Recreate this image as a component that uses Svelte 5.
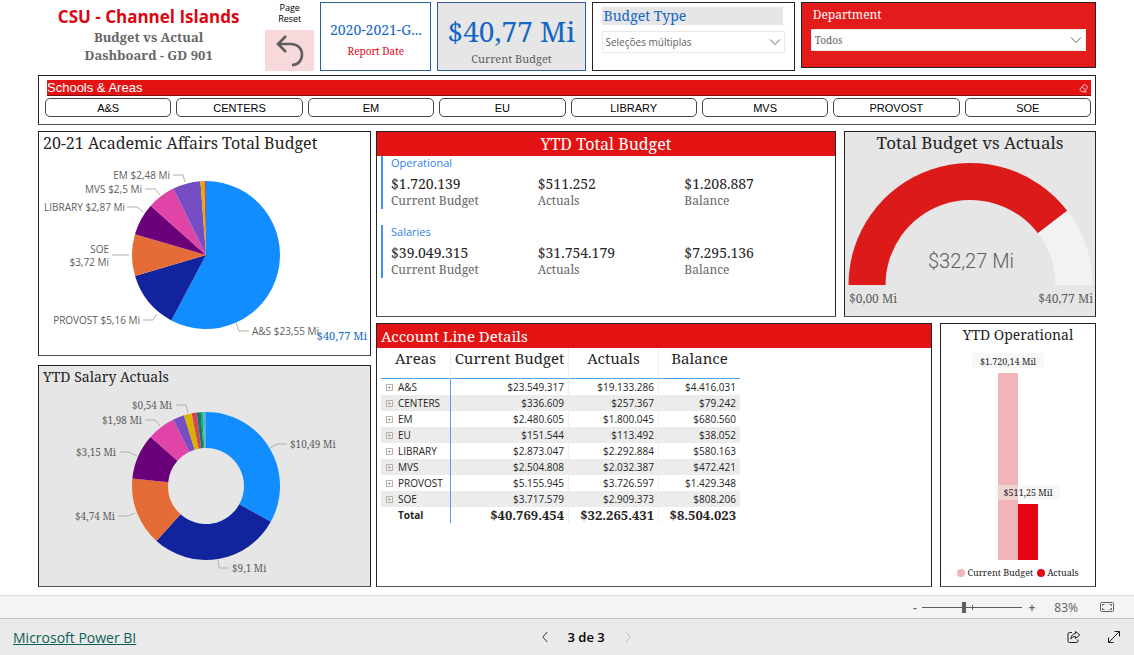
<script lang="ts">
	type Slice = { value: number; color: string };
	type Label = { text: string; x: number; y: number; anchor: 'start' | 'end'; line: string };

	const schools = ['A&S', 'CENTERS', 'EM', 'EU', 'LIBRARY', 'MVS', 'PROVOST', 'SOE'];
	let selected: string | null = $state(null);
	let zoom: number = $state(41);

	const budget: Slice[] = [
		{ value: 23.549, color: '#118dff' },
		{ value: 5.156, color: '#12239e' },
		{ value: 3.718, color: '#e66c37' },
		{ value: 2.873, color: '#6b007b' },
		{ value: 2.505, color: '#e044a7' },
		{ value: 2.481, color: '#744ec2' },
		{ value: 0.337, color: '#d9b300' },
		{ value: 0.152, color: '#d64550' }
	];
	const budgetLabels: Label[] = [
		{ text: 'EM $2,48 Mi', x: 131, y: 25, anchor: 'end', line: '134,21 144,21 146,28' },
		{ text: 'MVS $2,5 Mi', x: 103, y: 39, anchor: 'end', line: '106,35 116,35 121,41' },
		{ text: 'LIBRARY $2,87 Mi', x: 86, y: 57, anchor: 'end', line: '88,53 98,53 104,58' },
		{ text: 'SOE', x: 70, y: 99, anchor: 'end', line: '73,101 90,101' },
		{ text: '$3,72 Mi', x: 70, y: 112, anchor: 'end', line: '' },
		{ text: 'PROVOST $5,16 Mi', x: 101, y: 170, anchor: 'end', line: '104,166 114,166 118,160' },
		{ text: 'A&S $23,55 Mi', x: 213, y: 181, anchor: 'start', line: '197,169 200,177 210,177' }
	];

	const salaries: Slice[] = [
		{ value: 10.49, color: '#118dff' },
		{ value: 9.1, color: '#12239e' },
		{ value: 4.74, color: '#e66c37' },
		{ value: 3.15, color: '#6b007b' },
		{ value: 1.98, color: '#e044a7' },
		{ value: 0.77, color: '#744ec2' },
		{ value: 0.54, color: '#d9b300' },
		{ value: 0.35, color: '#d64550' },
		{ value: 0.28, color: '#197278' },
		{ value: 0.13, color: '#1aab40' },
		{ value: 0.07, color: '#15c6c4' },
		{ value: 0.16, color: '#5ea9e8' }
	];
	const salaryLabels: Label[] = [
		{ text: '$0,54 Mi', x: 133, y: 21, anchor: 'end', line: '137,17 147,17 149,25' },
		{ text: '$1,98 Mi', x: 103, y: 36, anchor: 'end', line: '106,32 116,32 121,38' },
		{ text: '$3,15 Mi', x: 77, y: 68, anchor: 'end', line: '81,64 90,64 98,68' },
		{ text: '$4,74 Mi', x: 76, y: 132, anchor: 'end', line: '79,128 89,128 96,125' },
		{ text: '$10,49 Mi', x: 251, y: 60, anchor: 'start', line: '231,60 238,56 248,56' },
		{ text: '$9,1 Mi', x: 193, y: 184, anchor: 'start', line: '179,172 180,180 190,180' }
	];

	const totals = [
		{ group: 'Operational', budget: '$1.720.139', actuals: '$511.252', balance: '$1.208.887' },
		{ group: 'Salaries', budget: '$39.049.315', actuals: '$31.754.179', balance: '$7.295.136' }
	];

	const rows = [
		['A&S', '$23.549.317', '$19.133.286', '$4.416.031'],
		['CENTERS', '$336.609', '$257.367', '$79.242'],
		['EM', '$2.480.605', '$1.800.045', '$680.560'],
		['EU', '$151.544', '$113.492', '$38.052'],
		['LIBRARY', '$2.873.047', '$2.292.884', '$580.163'],
		['MVS', '$2.504.808', '$2.032.387', '$472.421'],
		['PROVOST', '$5.155.945', '$3.726.597', '$1.429.348'],
		['SOE', '$3.717.579', '$2.909.373', '$808.206']
	];

	function arc(cx: number, cy: number, outer: number, inner: number, from: number, to: number) {
		const pt = (r: number, a: number) => `${cx + r * Math.sin(a)},${cy - r * Math.cos(a)}`;
		const large = to - from > Math.PI ? 1 : 0;
		return `M${pt(outer, from)} A${outer},${outer} 0 ${large} 1 ${pt(outer, to)} L${pt(inner, to)} A${inner},${inner} 0 ${large} 0 ${pt(inner, from)} Z`;
	}

	function ring(slices: Slice[], cx: number, cy: number, outer: number, inner: number) {
		const total = slices.reduce((sum, s) => sum + s.value, 0);
		let angle = 0;
		return slices.map((s) => {
			const start = angle;
			angle += (s.value / total) * Math.PI * 2;
			return { color: s.color, d: arc(cx, cy, outer, inner, start, angle) };
		});
	}

	const split = -Math.PI / 2 + (32.265 / 40.769) * Math.PI;
</script>

{#snippet chevron()}
	<svg class="chevron" viewBox="0 0 12 8" width="12" height="8" aria-hidden="true">
		<path d="M1 1.5 6 6.5 11 1.5" fill="none" stroke="currentColor" />
	</svg>
{/snippet}

{#snippet labels(items: Label[])}
	{#each items as l}
		<polyline points={l.line} fill="none" stroke="#b3b0ad" />
		<text x={l.x} y={l.y} text-anchor={l.anchor}>{l.text}</text>
	{/each}
{/snippet}

<main class="report">
	<header class="top">
		<div class="title">
			<h1>CSU - Channel Islands</h1>
			<p>Budget vs Actual<br />Dashboard - GD 901</p>
		</div>
		<div class="reset">
			<label for="reset">Page<br />Reset</label>
			<button id="reset" onclick={() => (selected = null)}>
				<svg viewBox="0 0 30 34" width="30" height="34" aria-hidden="true">
					<path d="M11 2 3 10 11 18M3 10H16C23 10 27 15 27 20.500C27 26.500 23 31 17 31" fill="none" stroke="#605e5c" stroke-width="2.600" />
				</svg>
			</button>
		</div>
		<div class="card date">
			<strong>2020-2021-G...</strong>
			<span>Report Date</span>
		</div>
		<div class="card amount">
			<strong>$40,77 Mi</strong>
			<span>Current Budget</span>
		</div>
		<div class="slicer">
			<label for="type">Budget Type</label>
			<div class="select">
				<select id="type"><option>Seleções múltiplas</option></select>
				{@render chevron()}
			</div>
		</div>
		<div class="slicer department">
			<label for="department">Department</label>
			<div class="select">
				<select id="department"><option>Todos</option></select>
				{@render chevron()}
			</div>
		</div>
	</header>

	<section class="panel schools">
		<div class="schools-head">
			<h2>Schools & Areas</h2>
			<button class="clear" aria-label="Clear" onclick={() => (selected = null)}>
				<svg viewBox="0 0 10 10" width="10" height="10" aria-hidden="true">
					<path d="M1 6 5.500 1.200 9 4.300 4.700 8.800H3L1 7ZM3 4 6.700 7M4.700 8.800H8" fill="none" stroke="#f3c0c0" />
				</svg>
			</button>
		</div>
		<div class="chips">
			{#each schools as s}
				<button class:active={selected === s} onclick={() => (selected = s)}>{s}</button>
			{/each}
		</div>
	</section>

	<div class="columns">
		<div class="stack left">
			<section class="panel">
				<h2 class="big">20-21 Academic Affairs Total Budget</h2>
				<svg class="chart sans" viewBox="0 0 331 201">
					{#each ring(budget, 167, 101, 74, 0) as s}
						<path d={s.d} fill={s.color} />
					{/each}
					{@render labels(budgetLabels)}
					<text class="sum" x="328" y="186" text-anchor="end">$40,77 Mi</text>
				</svg>
			</section>
			<section class="panel gray">
				<h2>YTD Salary Actuals</h2>
				<svg class="chart" viewBox="0 0 331 198">
					{#each ring(salaries, 167, 98, 74, 38) as s}
						<path d={s.d} fill={s.color} />
					{/each}
					{@render labels(salaryLabels)}
				</svg>
			</section>
		</div>

		<div class="stack right">
			<div class="pair upper">
				<section class="panel">
					<h2 class="red big center">YTD Total Budget</h2>
					{#each totals as t}
						<div class="totals">
							<h3>{t.group}</h3>
							<dl>
								<div><dt>Current Budget</dt><dd>{t.budget}</dd></div>
								<div><dt>Actuals</dt><dd>{t.actuals}</dd></div>
								<div><dt>Balance</dt><dd>{t.balance}</dd></div>
							</dl>
						</div>
					{/each}
				</section>
				<section class="panel gray">
					<h2 class="large center">Total Budget vs Actuals</h2>
					<svg class="chart gauge" viewBox="0 0 250 160">
						<path d={arc(125.5, 129, 122, 85, -Math.PI / 2, split)} fill="#dd1a1a" />
						<path d={arc(125.5, 129, 122, 85, split, Math.PI / 2)} fill="#f3f2f1" />
						<text class="value" x="126" y="112" text-anchor="middle">$32,27 Mi</text>
						<text x="4" y="147">$0,00 Mi</text>
						<text x="248" y="147" text-anchor="end">$40,77 Mi</text>
					</svg>
				</section>
			</div>

			<div class="pair lower">
				<section class="panel">
					<h2 class="red">Account Line Details</h2>
					<table>
						<thead>
							<tr><th>Areas</th><th>Current Budget</th><th>Actuals</th><th>Balance</th></tr>
						</thead>
						<tbody>
							{#each rows as [area, ...amounts]}
								<tr>
									<th scope="row">
										<button class="expand" aria-label="Expand {area}">
											<svg viewBox="0 0 7 7" width="7" height="7" aria-hidden="true">
												<path d="M.5.5H6.500V6.500H.5ZM2 3.500H5M3.500 2V5" fill="none" stroke="#b3b0ad" />
											</svg>
										</button>{area}
									</th>
									{#each amounts as a}<td>{a}</td>{/each}
								</tr>
							{/each}
						</tbody>
						<tfoot>
							<tr><th scope="row">Total</th><td>$40.769.454</td><td>$32.265.431</td><td>$8.504.023</td></tr>
						</tfoot>
					</table>
				</section>
				<section class="panel">
					<h2 class="center">YTD Operational</h2>
					<svg class="chart bars" viewBox="0 0 154 216">
						<rect x="57" y="25" width="20" height="187" fill="#efb5b9" />
						<rect x="77" y="156" width="20" height="56" fill="#e40613" />
						<rect x="31" y="5" width="72" height="15" rx="2" fill="#f5f5f5" fill-opacity=".8" />
						<rect x="54" y="137" width="65" height="15" rx="2" fill="#f0f0f0" fill-opacity=".5" />
						<text x="67" y="17" text-anchor="middle">$1.720,14 Mil</text>
						<text x="87" y="148" text-anchor="middle">$511,25 Mil</text>
					</svg>
					<ul class="legend">
						<li><i class="light"></i>Current Budget</li>
						<li><i></i>Actuals</li>
					</ul>
				</section>
			</div>
		</div>
	</div>
</main>

<div class="zoombar">
	<button aria-label="Zoom out" onclick={() => (zoom -= 5)}>-</button>
	<div class="slider">
		<input type="range" min="0" max="100" aria-label="Zoom" bind:value={zoom} />
		<span class="tick"></span>
	</div>
	<button aria-label="Zoom in" onclick={() => (zoom += 5)}>+</button>
	<output>83%</output>
	<button class="fit" aria-label="Fit to page">
		<svg viewBox="0 0 14 10" width="14" height="10" aria-hidden="true">
			<rect x=".5" y=".5" width="13" height="9" rx="1" fill="none" stroke="#605e5c" />
			<path d="M2.500 4V2.500H4.500M9.500 2.500H11.500V4M11.500 6V7.500H9.500M4.500 7.500H2.500V6" fill="none" stroke="#605e5c" />
		</svg>
	</button>
</div>

<footer>
	<a href="#powerbi">Microsoft Power BI</a>
	<nav>
		<button aria-label="Previous page">
			<svg viewBox="0 0 6 12" width="6" height="12"><path d="M5.300 1 .8 6 5.300 11" fill="none" stroke="#323130" /></svg>
		</button>
		<span>3 de 3</span>
		<button aria-label="Next page" disabled>
			<svg viewBox="0 0 6 12" width="6" height="12"><path d="M.7 1 5.200 6 .7 11" fill="none" stroke="#bebbb8" /></svg>
		</button>
	</nav>
	<div class="actions">
		<button aria-label="Share">
			<svg viewBox="0 0 14 14" width="14" height="14">
				<path d="M5 2.500H2.500Q1 2.500 1 4V11Q1 12.500 2.500 12.500H9.500Q11 12.500 11 11V9.500M8.500 1.500 12.800 5 8.500 8.500V6.500Q5.500 6.300 3.800 9Q4.300 4 8.500 3.600Z" fill="none" stroke="#201f1e" stroke-linejoin="round" />
			</svg>
		</button>
		<button aria-label="Full screen">
			<svg viewBox="0 0 14 14" width="14" height="14">
				<path d="M1.500 12.500 12.500 1.500M7.500 1.500H12.500V6.500M1.500 7.500V12.500H6.500" fill="none" stroke="#201f1e" />
			</svg>
		</button>
	</div>
</footer>

<style>
	:global(body) {
		--serif: 'Noto Serif', 'DejaVu Serif Condensed', 'DejaVu Serif', serif;
		--sans: 'Segoe UI', 'Open Sans', sans-serif;
		background: #fff;
		color: #252423;
		font-family: var(--sans);
	}

	h1,
	h2,
	h3,
	p,
	dl,
	dd,
	ul {
		margin: 0;
		padding: 0;
	}

	button {
		padding: 0;
		border: 0;
		background: none;
		color: inherit;
		font: inherit;
		cursor: pointer;
	}

	svg {
		display: block;
	}

	.report {
		padding: 2px 38px 8px;
		font-family: var(--serif);
	}

	.top {
		display: grid;
		grid-template-columns: 221fr 49fr 111fr 148fr 203fr 295fr;
		gap: 6px;
		height: 69px;
	}

	.top > div {
		box-sizing: border-box;
		min-width: 0;
	}

	.title {
		padding-top: 4px;
		text-align: center;
		white-space: nowrap;
	}

	h1 {
		color: #dd0510;
		font: 700 17px/22px var(--sans);
	}

	.title p {
		color: #666;
		font-size: 13px;
		font-weight: 700;
		line-height: 18px;
	}

	.reset {
		display: flex;
		flex-direction: column;
		justify-content: space-between;
		font: 9px/11px var(--sans);
		text-align: center;
	}

	.reset label {
		color: #000;
	}

	.reset button {
		display: grid;
		place-items: center;
		height: 41px;
		background: #f7d9db;
	}

	.card {
		display: flex;
		flex-direction: column;
		align-items: center;
		justify-content: center;
		border: 1px solid #2f5f94;
		color: #1267c4;
		white-space: nowrap;
	}

	.card strong {
		font-weight: 400;
	}

	.date {
		gap: 4px;
		padding-top: 6px;
	}

	.date strong {
		font-size: 14px;
		line-height: 18px;
	}

	.date span {
		color: #dd0510;
		font-size: 10px;
		line-height: 16px;
	}

	.amount {
		background: #e6e6e6;
	}

	.amount strong {
		padding-top: 4px;
		font-size: 28px;
		line-height: 40px;
	}

	.amount span {
		color: #605e5c;
		font-size: 11px;
		line-height: 16px;
	}

	.slicer {
		display: flex;
		flex-direction: column;
		gap: 6px;
		padding: 4px 9px;
		border: 1px solid #252423;
	}

	.slicer label {
		margin-right: 2px;
		padding-left: 2px;
		background: #e6e6e6;
		color: #1267c4;
		font-size: 14px;
		line-height: 18px;
	}

	.select {
		position: relative;
		color: #605e5c;
	}

	.select select {
		box-sizing: border-box;
		display: block;
		width: 100%;
		height: 22px;
		padding: 0 3px;
		border: 1px solid #eaeaea;
		border-radius: 0;
		background: #fff;
		color: inherit;
		appearance: none;
		font: 10px var(--sans);
	}

	.chevron {
		position: absolute;
		top: 7px;
		right: 4px;
	}

	.department {
		height: 66px;
		background: #e41b1b;
	}

	.department label {
		background: none;
		color: #fff;
		font-size: 12px;
		line-height: 16px;
	}

	.department select {
		font: 10px var(--serif);
	}

	.panel {
		box-sizing: border-box;
		min-width: 0;
		border: 1px solid #252423;
		border-bottom-color: #555;
		background: #fff;
	}

	.gray {
		background: #e6e6e6;
	}

	.panel h2 {
		padding: 0 4px;
		font-size: 14px;
		font-weight: 400;
		line-height: 22px;
		white-space: nowrap;
	}

	.panel .center {
		text-align: center;
	}

	.panel h2.red {
		background: #e41313;
		color: #fff;
		font-size: 15px;
		line-height: 24px;
	}

	.panel h2.big {
		font-size: 16px;
	}

	.panel h2.large {
		font-size: 17px;
	}

	.upper h2,
	.lower h2 {
		height: 24px;
	}

	.panel.schools {
		margin-top: 4px;
		padding: 4px 4px 7px 6px;
	}

	.schools-head {
		display: flex;
		align-items: center;
		justify-content: space-between;
		margin-left: 2px;
		padding-right: 2px;
		border-bottom: 1px solid #7c1010;
		background: #e41313;
	}

	.schools-head h2 {
		padding: 0;
		color: #fff;
		font: 13px/15px 'Liberation Sans', Arial, sans-serif;
	}

	.chips {
		display: grid;
		grid-template-columns: repeat(8, 1fr);
		gap: 5px;
		margin-top: 2px;
	}

	.chips button {
		height: 19px;
		border: 1px solid #444;
		border-radius: 5px;
		background: #fff;
		color: #000;
		font: 11px 'Liberation Sans', Arial, sans-serif;
	}

	.chips .active {
		background: #e6e6e6;
	}

	.columns {
		display: grid;
		grid-template-columns: 333fr 720fr;
		gap: 5px;
		margin-top: 6px;
	}

	.stack {
		display: flex;
		flex-direction: column;
		min-width: 0;
	}

	.left {
		gap: 9px;
	}

	.right {
		gap: 6px;
	}

	.pair {
		display: grid;
		gap: 8px;
	}

	.upper {
		grid-template-columns: 460fr 252fr;
	}

	.lower {
		grid-template-columns: 556fr 156fr;
		flex: 1;
	}

	.chart {
		width: 100%;
		fill: #605e5c;
		font-size: 10px;
	}

	.sans {
		font-family: var(--sans);
	}

	.sum {
		fill: #1267c4;
		font: 11px var(--serif);
	}

	.gauge {
		font-size: 12px;
	}

	.value {
		font: 300 20px DIN, Roboto, sans-serif;
	}

	.bars {
		fill: #252423;
		font-size: 9px;
	}

	.totals {
		margin: 0 4px 16px;
		padding-left: 8px;
		border-left: 2px solid #3f96f2;
	}

	.totals h3 {
		color: #2f80ed;
		font: 11px/14px var(--sans);
	}

	.totals dl {
		display: grid;
		grid-template-columns: repeat(3, 1fr);
		padding-top: 5px;
	}

	.totals dl div {
		display: flex;
		flex-direction: column-reverse;
	}

	.totals dt {
		color: #666;
		font-size: 12px;
		line-height: 17px;
	}

	.totals dd {
		font-size: 14px;
		line-height: 17px;
	}

	table {
		width: 359px;
		margin-left: 4px;
		border-spacing: 0;
		table-layout: fixed;
	}

	th,
	td {
		box-sizing: border-box;
		border-right: 1px solid #eee;
	}

	thead th {
		height: 31px;
		padding: 0 0 10px;
		border-bottom: 1px solid #4da1ee;
		font-size: 15px;
		font-weight: 400;
		line-height: 20px;
		white-space: nowrap;
	}

	thead th:nth-child(1) {
		width: 70px;
	}

	thead th:nth-child(2) {
		width: 118px;
	}

	thead th:nth-child(3) {
		width: 90px;
	}

	thead th:last-child,
	td:last-child {
		border-right: 0;
	}

	tbody th,
	tbody td {
		height: 16px;
		padding: 0 4px 0 0;
		font: 10px/16px var(--sans);
		text-align: right;
	}

	tbody th,
	tfoot th {
		border-right: 1px solid #4da1ee;
		text-align: left;
		white-space: nowrap;
	}

	tbody tr:nth-child(even) {
		background: #ececec;
	}

	.expand {
		display: inline-block;
		margin: 0 5px;
	}

	tfoot th {
		padding: 0 0 0 17px;
		font: 700 10px/16px var(--sans);
	}

	tfoot td {
		padding: 0 4px 0 0;
		font-size: 13px;
		font-weight: 700;
		line-height: 16px;
		text-align: right;
	}

	.legend {
		display: flex;
		justify-content: center;
		gap: 4px;
		font-size: 9px;
		line-height: 18px;
		list-style: none;
		white-space: nowrap;
	}

	.legend li {
		display: flex;
		align-items: center;
		gap: 2px;
	}

	.legend i {
		width: 8px;
		height: 8px;
		border-radius: 50%;
		background: #e40613;
	}

	.legend .light {
		background: #efb5b9;
	}

	.zoombar {
		display: flex;
		align-items: center;
		justify-content: flex-end;
		height: 22px;
		padding-right: 19px;
		border-top: 1px solid #e1dfdd;
		background: #f4f4f4;
		color: #605e5c;
		font-size: 12px;
	}

	.zoombar button {
		width: 15px;
		font-weight: 600;
	}

	.zoombar output {
		margin: 0 22px 0 15px;
	}

	.slider {
		position: relative;
		width: 100px;
		margin-right: 2px;
	}

	.slider input {
		display: block;
		width: 100%;
		height: 12px;
		margin: 0;
		appearance: none;
		background: linear-gradient(#605e5c, #605e5c) center / 100% 1px no-repeat;
	}

	.slider input::-webkit-slider-thumb {
		appearance: none;
		width: 4px;
		height: 11px;
		background: #605e5c;
	}

	.tick {
		position: absolute;
		top: 4px;
		left: 50%;
		width: 1px;
		height: 5px;
		background: #605e5c;
	}

	footer {
		display: flex;
		align-items: center;
		height: 36px;
		padding-left: 13px;
		border-top: 1px solid #c8c6c4;
		background: #eaeaea;
		color: #000;
		font-size: 13px;
	}

	footer a {
		color: #0e5f57;
		font-size: 14px;
	}

	nav {
		display: flex;
		align-items: center;
		gap: 20px;
		margin: 0 auto;
		font-weight: 600;
	}

	.actions {
		display: flex;
	}

	.actions button {
		display: grid;
		place-items: center;
		width: 40px;
		height: 32px;
	}

	.actions button:first-child {
		margin-left: 18px;
	}
</style>
